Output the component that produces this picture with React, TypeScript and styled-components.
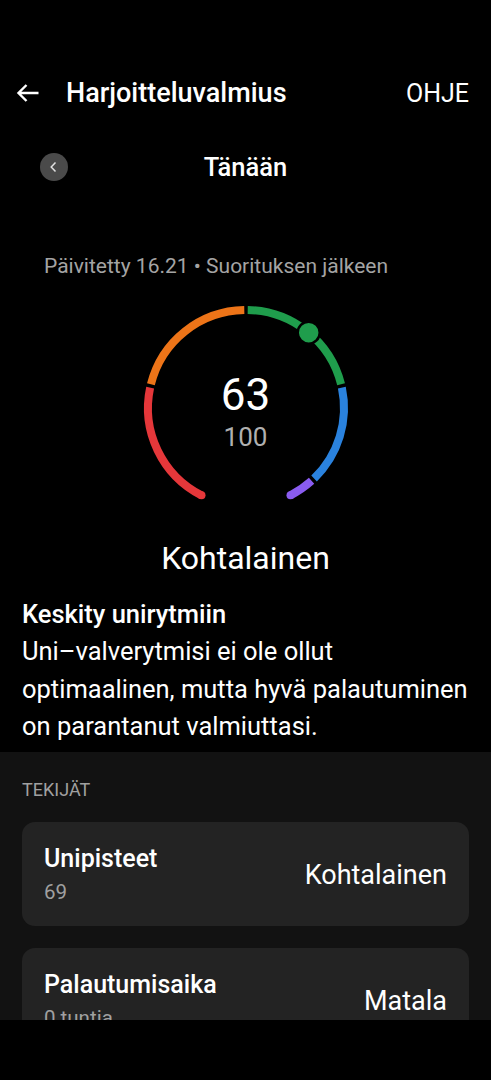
import React from "react";
import styled, { createGlobalStyle } from "styled-components";

const GlobalStyle = createGlobalStyle`
  html, body {
    margin: 0;
    padding: 0;
    background: #000;
  }
  body {
    font-family: Roboto, "Noto Sans", "Liberation Sans", sans-serif;
    color: #fff;
  }
`;

const CX = 110;
const CY = 110;
const R = 98;

const polar = (deg: number, r = R) => {
  const a = (deg * Math.PI) / 180;
  return { x: CX + r * Math.sin(a), y: CY - r * Math.cos(a) };
};

const arc = (from: number, to: number) => {
  const s = polar(from);
  const e = polar(to);
  const large = to - from > 180 ? 1 : 0;
  return `M${s.x.toFixed(2)} ${s.y.toFixed(2)} A${R} ${R} 0 ${large} 1 ${e.x.toFixed(2)} ${e.y.toFixed(2)}`;
};

const segments = [
  { from: -153, to: -78, color: "#e5373a" },
  { from: -76, to: -1, color: "#ed7418" },
  { from: 1, to: 76, color: "#1f9d4c" },
  { from: 78, to: 136, color: "#2a82de" },
  { from: 138, to: 153, color: "#8a5cf0" },
];

const score = 63;

const Gauge = () => {
  const dotAngle = -153 + (score / 100) * 306;
  const dot = polar(dotAngle);
  const start = polar(-153);
  const end = polar(153);
  return (
    <GaugeBox>
      <svg width="220" height="220" viewBox="0 0 220 220">
        {segments.map((s) => (
          <path
            key={s.from}
            d={arc(s.from, s.to)}
            fill="none"
            stroke={s.color}
            strokeWidth={8}
          />
        ))}
        <circle cx={start.x} cy={start.y} r={4} fill="#e5373a" />
        <circle cx={end.x} cy={end.y} r={4} fill="#8a5cf0" />
        <circle
          cx={dot.x}
          cy={dot.y}
          r={11}
          fill="#1f9d4c"
          stroke="#000"
          strokeWidth={2.5}
        />
      </svg>
      <GaugeLabel>
        <Score>{score}</Score>
        <Max>100</Max>
      </GaugeLabel>
    </GaugeBox>
  );
};

const factors = [
  { title: "Unipisteet", sub: "69", value: "Kohtalainen" },
  { title: "Palautumisaika", sub: "0 tuntia", value: "Matala" },
];

export default function App() {
  return (
    <>
      <GlobalStyle />
      <Screen>
        <Content>
          <Header>
            <IconButton aria-label="Takaisin">
              <svg width="24" height="20" viewBox="0 0 24 20">
                <path
                  d="M22.5 10H3 M10.5 2 L2.5 10 L10.5 18"
                  fill="none"
                  stroke="#fff"
                  strokeWidth="2.4"
                  strokeLinejoin="miter"
                />
              </svg>
            </IconButton>
            <Title>Harjoitteluvalmius</Title>
            <HelpLink>OHJE</HelpLink>
          </Header>

          <DayRow>
            <RoundButton aria-label="Edellinen">
              <svg width="12" height="12" viewBox="0 0 12 12">
                <path
                  d="M7.5 1.5 L3.2 6 L7.5 10.5"
                  fill="none"
                  stroke="#e0e0e0"
                  strokeWidth="1.5"
                />
              </svg>
            </RoundButton>
            <DayTitle>Tänään</DayTitle>
            <span />
          </DayRow>

          <Updated>Päivitetty 16.21 • Suorituksen jälkeen</Updated>

          <Gauge />

          <Level>Kohtalainen</Level>

          <Advice>
            <AdviceTitle>Keskity unirytmiin</AdviceTitle>
            <AdviceText>
              Uni–valverytmisi ei ole ollut
              <br />
              optimaalinen, mutta hyvä palautuminen
              <br />
              on parantanut valmiuttasi.
            </AdviceText>
          </Advice>

          <Factors>
            <SectionLabel>TEKIJÄT</SectionLabel>
            <CardList>
              {factors.map((f) => (
                <Card key={f.title}>
                  <CardText>
                    <CardTitle>{f.title}</CardTitle>
                    <CardSub>{f.sub}</CardSub>
                  </CardText>
                  <CardValue>{f.value}</CardValue>
                </Card>
              ))}
            </CardList>
          </Factors>
        </Content>
        <NavBar />
      </Screen>
    </>
  );
}

const Screen = styled.div`
  width: 491px;
  height: 1080px;
  display: flex;
  flex-direction: column;
  background: #000;
  overflow: hidden;
`;

const Content = styled.div`
  height: 1020px;
  flex-shrink: 0;
  overflow: hidden;
  display: flex;
  flex-direction: column;
  > * {
    flex-shrink: 0;
  }
`;

const NavBar = styled.div`
  height: 60px;
  background: #000;
`;

const Header = styled.header`
  margin-top: 65px;
  height: 56px;
  display: flex;
  align-items: center;
  padding: 0 22px 0 14px;
`;

const IconButton = styled.div`
  width: 28px;
  height: 28px;
  display: flex;
  align-items: center;
  justify-content: center;
`;

const Title = styled.h1`
  flex: 1;
  margin: 0 0 0 24px;
  font-size: 27px;
  font-weight: 500;
`;

const HelpLink = styled.span`
  font-size: 25px;
  font-weight: 400;
`;

const DayRow = styled.div`
  margin-top: 24px;
  height: 44px;
  display: grid;
  grid-template-columns: 1fr auto 1fr;
  align-items: center;
  padding: 0 40px;
`;

const RoundButton = styled.div`
  width: 28px;
  height: 28px;
  border-radius: 50%;
  background: #4a4a4a;
  display: flex;
  align-items: center;
  justify-content: center;
`;

const DayTitle = styled.div`
  font-size: 25.5px;
  font-weight: 500;
`;

const Updated = styled.div`
  margin-top: 64px;
  padding-left: 44px;
  font-size: 21px;
  line-height: 26px;
  color: #a4a4a4;
`;

const GaugeBox = styled.div`
  position: relative;
  margin: 19px auto 0;
  width: 220px;
  height: 220px;
  svg {
    display: block;
  }
`;

const GaugeLabel = styled.div`
  position: absolute;
  inset: 0;
  display: flex;
  flex-direction: column;
  align-items: center;
  padding-top: 73px;
`;

const Score = styled.div`
  font-size: 44px;
  line-height: 48px;
  font-weight: 400;
`;

const Max = styled.div`
  margin-top: 3px;
  font-size: 26px;
  line-height: 30px;
  color: #b0b0b0;
`;

const Level = styled.div`
  margin-top: 21px;
  text-align: center;
  font-size: 32px;
  line-height: 38px;
`;

const Advice = styled.section`
  margin-top: 22px;
  padding: 0 22px 6px;
`;

const AdviceTitle = styled.div`
  font-size: 25.5px;
  line-height: 30px;
  font-weight: 500;
`;

const AdviceText = styled.p`
  margin: 4px 0 0;
  font-size: 25.5px;
  line-height: 37.5px;
  white-space: nowrap;
`;

const Factors = styled.section`
  flex: 1 0 auto;
  background: #121212;
  padding: 27px 22px 0;
`;

const SectionLabel = styled.div`
  font-size: 18px;
  line-height: 22px;
  color: #a0a0a0;
`;

const CardList = styled.div`
  margin-top: 21px;
  display: flex;
  flex-direction: column;
  gap: 22px;
`;

const Card = styled.div`
  height: 104px;
  border-radius: 13px;
  background: #232323;
  display: flex;
  align-items: center;
  justify-content: space-between;
  padding: 0 22px;
  box-sizing: border-box;
`;

const CardText = styled.div`
  display: flex;
  flex-direction: column;
`;

const CardTitle = styled.div`
  font-size: 25px;
  line-height: 32px;
  font-weight: 500;
`;

const CardSub = styled.div`
  margin-top: 4px;
  font-size: 20.5px;
  line-height: 26px;
  color: #a0a0a0;
`;

const CardValue = styled.div`
  font-size: 27px;
  line-height: 32px;
  padding-top: 2px;
`;
